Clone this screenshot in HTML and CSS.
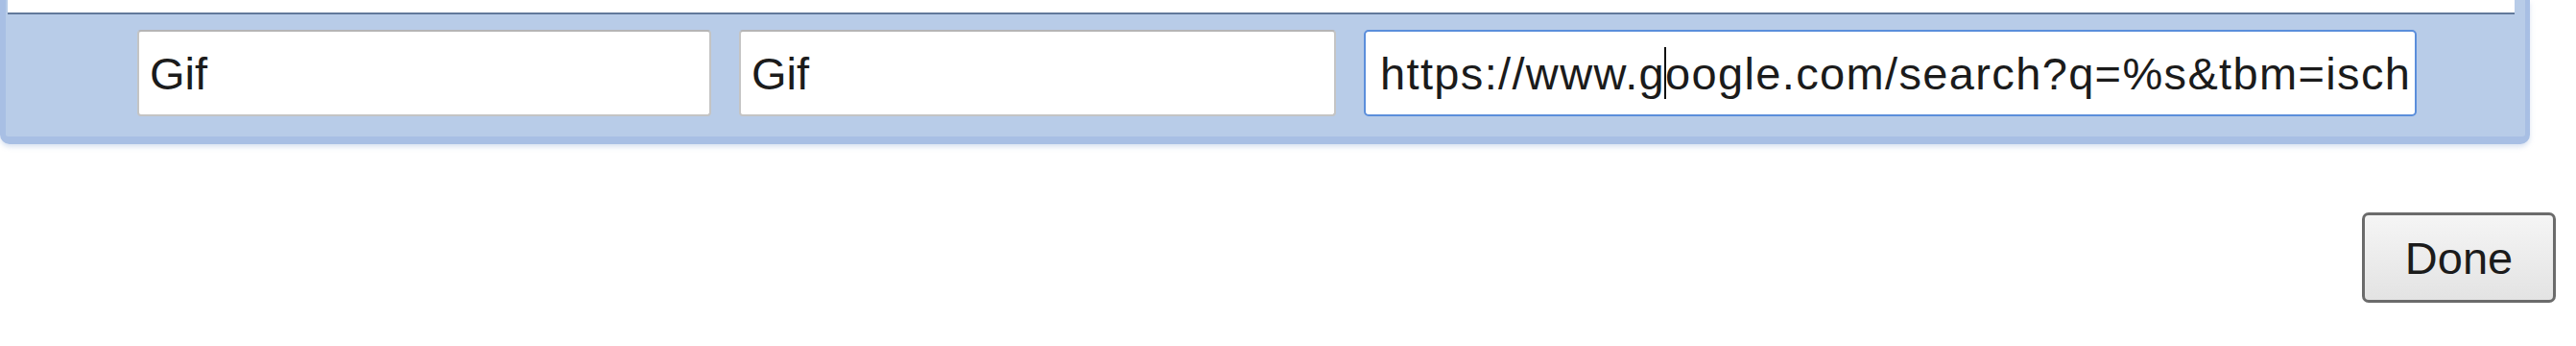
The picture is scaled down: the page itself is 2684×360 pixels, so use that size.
FILE: index.html
```html
<!DOCTYPE html>
<html lang="en">
<head>
<meta charset="utf-8">
<title>Search engines</title>
<link rel="stylesheet" href="styles.css">
</head>
<body>
<div class="panel">
  <div class="list"></div>
  <div class="row">
    <div class="field field-name">Gif</div>
    <div class="field field-keyword">Gif</div>
    <div class="field field-url focused">https://www.g<span class="caret"></span>oogle.com/search?q=%s&amp;tbm=isch</div>
  </div>
</div>
<div class="footer">
  <button class="done" type="button">Done</button>
</div>
</body>
</html>
```
FILE: styles.css
```css
html, body {
  margin: 0;
  padding: 0;
  background: #ffffff;
}

body {
  width: 2684px;
  height: 360px;
  overflow: hidden;
  font-family: "Liberation Sans", Arial, sans-serif;
  color: #1b1b1b;
}

.panel {
  width: 2636px;
  box-sizing: border-box;
  background: #b8cce8;
  border-style: solid;
  border-color: #a8bfe4;
  border-width: 0 5px 8px 6px;
  border-radius: 0 0 10px 10px;
  box-shadow: 0 3px 5px rgba(150, 175, 215, 0.35);
}

.list {
  height: 13px;
  margin: 0 11px 0 2px;
  background: #ffffff;
  border-bottom: 2px solid #62799b;
}

.row {
  display: flex;
  gap: 29px;
  padding: 16px 0 21px 137px;
}

.field {
  height: 90px;
  box-sizing: border-box;
  display: flex;
  align-items: center;
  background: #ffffff;
  border: 2px solid #c4c4c4;
  border-top-color: #b5b5b5;
  border-radius: 4px;
  padding-left: 11px;
  font-size: 47px;
  white-space: nowrap;
  overflow: hidden;
}

.field-name {
  width: 598px;
}

.field-keyword {
  width: 622px;
}

.field-url {
  width: 1097px;
  padding-left: 15px;
  letter-spacing: 1.35px;
}

.focused {
  border-color: #5b8edb;
  border-radius: 5px;
}

.caret {
  display: inline-block;
  width: 2px;
  height: 54px;
  margin: 0 -1px;
  background: #111111;
  vertical-align: -13px;
}

.footer {
  display: flex;
  justify-content: flex-end;
  padding-right: 21px;
  margin-top: 71px;
}

.done {
  width: 202px;
  height: 94px;
  box-sizing: border-box;
  border: 3px solid #6b6b6b;
  border-radius: 7px;
  background: linear-gradient(#f5f5f5, #e3e3e3);
  font-family: "Liberation Sans", Arial, sans-serif;
  font-size: 47px;
  color: #1b1b1b;
  padding: 0;
}
```
